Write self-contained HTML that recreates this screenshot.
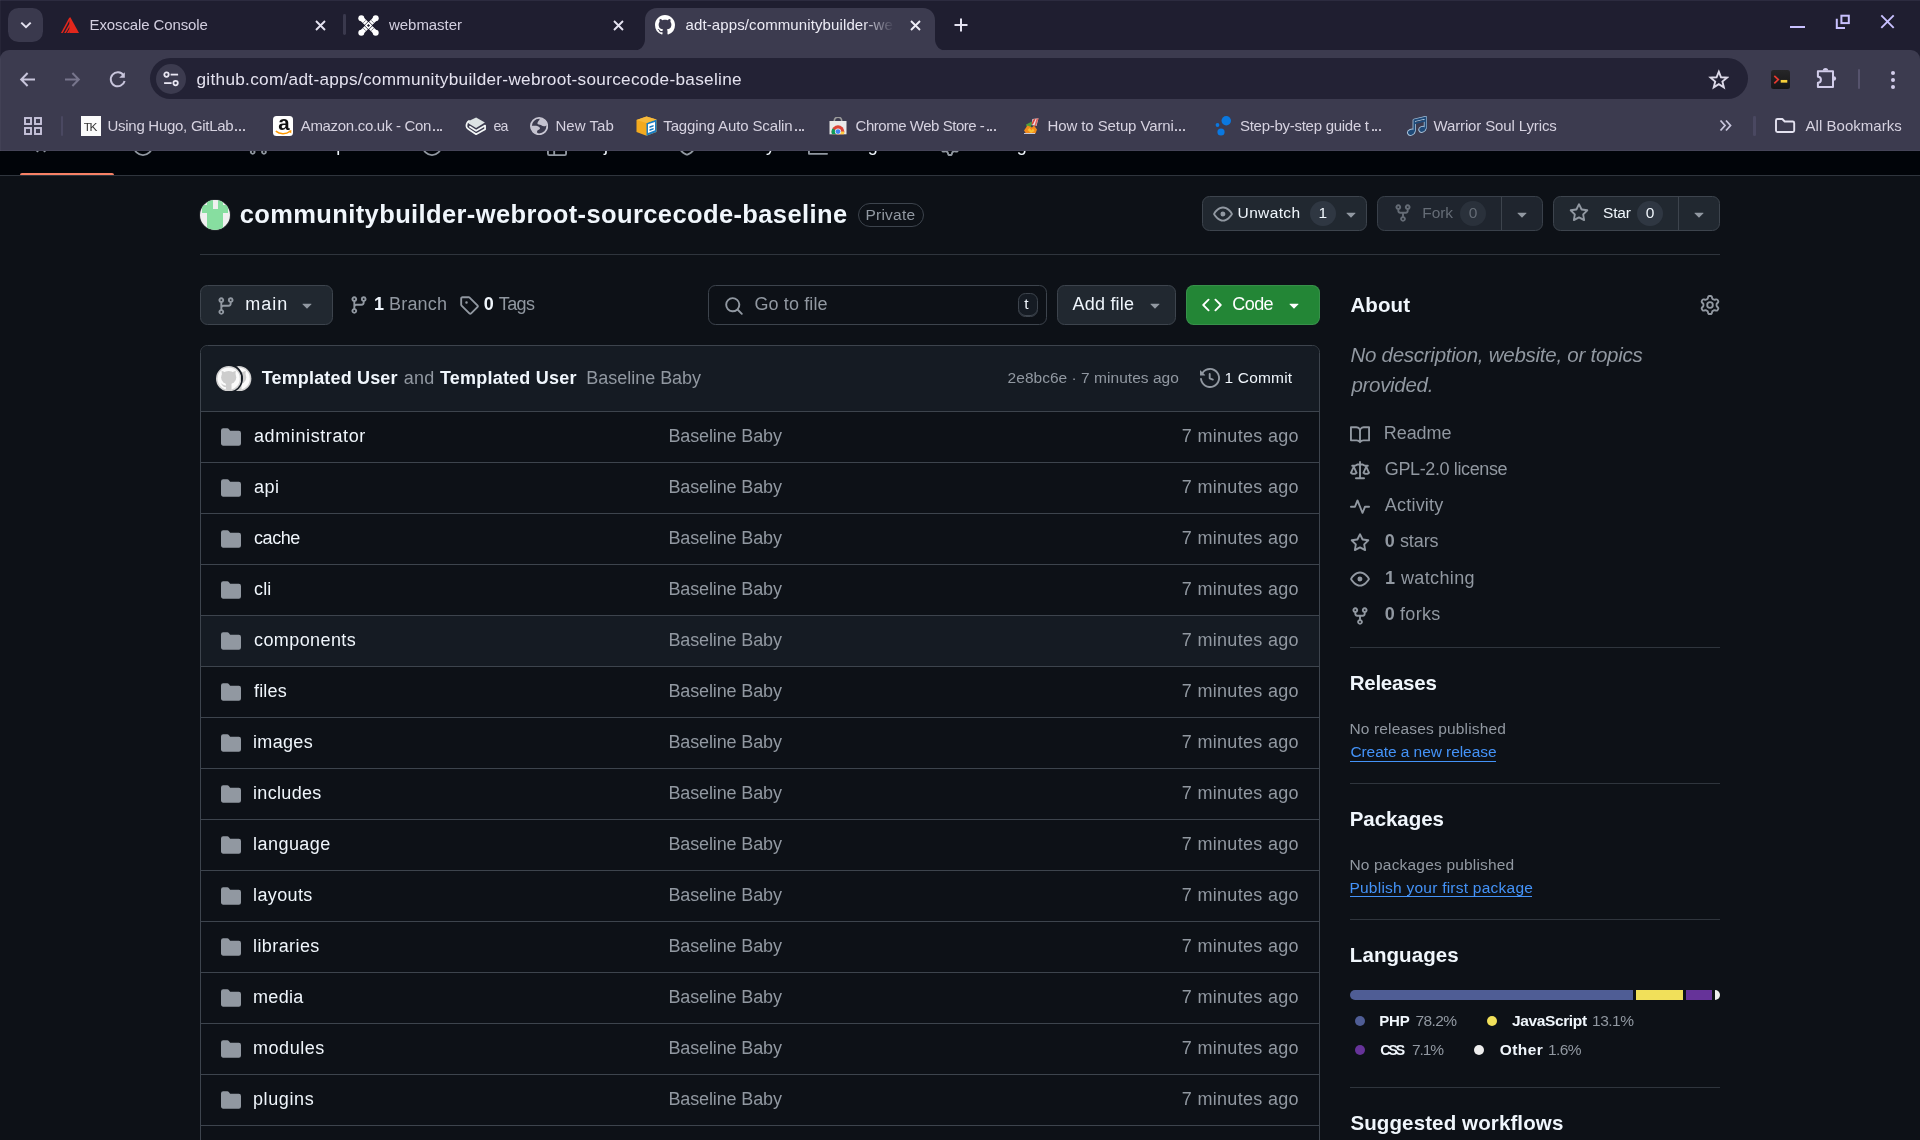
<!DOCTYPE html>
<html><head><meta charset="utf-8"><title>adt-apps/communitybuilder-webroot-sourcecode-baseline</title>
<style>
html,body{margin:0;padding:0}
body{width:1920px;height:1140px;overflow:hidden;position:relative;background:#0d1117;font-family:"Liberation Sans",sans-serif;}
.b{position:absolute;box-sizing:border-box;display:block}
.t{position:absolute;line-height:1;white-space:pre;font-family:"Liberation Sans",sans-serif}
#root{position:absolute;left:0;top:0;width:1920px;height:1140px;overflow:hidden;will-change:transform;transform:translateZ(0)}
</style></head><body><div id="root">
<div class="b" style="left:0px;top:0px;width:1920px;height:151px;background:#1f1e30"></div>
<div class="b" style="left:0px;top:50px;width:1920px;height:101px;background:#3c3b4f;border-radius:9px 9px 0 0"></div>
<div class="b" style="left:8px;top:8px;width:35px;height:34px;background:#3a394d;border-radius:10.500px"></div>
<svg class="b" style="left:18px;top:17px;" width="16" height="16" viewBox="0 0 16 16"><path d="M3.3 5.6 8 10.2l4.7-4.6" fill="none" stroke="#e4e2f0" stroke-width="2"/></svg>
<svg class="b" style="left:60px;top:16px;" width="20" height="18" viewBox="0 0 20 18"><defs><clipPath id="exo"><path d="M0 0h20v16.950H0z"/></clipPath></defs><g clip-path="url(#exo)"><path d="M10.200 1.100 19 16.950H9.300V3.400z" fill="#e2271c"/><g stroke="#e2271c" stroke-width="1.550" fill="none"><path d="M10 1.800 1.300 18"/><path d="M9.900 8.300 4.500 18"/><path d="M9.900 13.300 7.300 18"/></g></g></svg>
<span class="t" style="left:89.50px;top:17.00px;font-size:15px;color:#d3cfe0;letter-spacing:-0.115px;">Exoscale Console</span>
<svg class="b" style="left:315.2px;top:20.2px;" width="11" height="11" viewBox="0 0 11 11"><path d="M1 1l9 9M10 1l-9 9" stroke="#e4e2f0" stroke-width="1.9" fill="none"/></svg>
<div class="b" style="left:343.2px;top:14px;width:2.8px;height:20.5px;background:#3a394d;border-radius:1.400px"></div>
<svg class="b" style="left:357.5px;top:14.5px;" width="21" height="21" viewBox="0 0 21 21"><g fill="none" stroke="#fff" stroke-width="4.500" stroke-linecap="round"><path d="M4.600 4.600 16.400 16.400M16.400 4.600 4.600 16.400"/></g>
<g fill="#fff"><circle cx="3.300" cy="3.300" r="3"/><circle cx="17.700" cy="3.300" r="3"/><circle cx="3.300" cy="17.700" r="3"/><circle cx="17.700" cy="17.700" r="3"/></g>
<g fill="none" stroke="#1f1e30" stroke-width=".900" opacity=".9"><path d="M10.500 6.300 14.700 10.500 10.500 14.700 6.300 10.500Z"/><path d="M5.300 7.800 7.800 5.300M13.200 5.300 15.700 7.800M15.700 13.200 13.200 15.700M7.800 15.700 5.300 13.200" opacity=".7"/></g>
<rect x="9.400" y="9.400" width="2.200" height="2.200" transform="rotate(45 10.500 10.500)" fill="#1f1e30"/></svg>
<span class="t" style="left:389.00px;top:17.00px;font-size:15px;color:#d3cfe0;letter-spacing:-0.046px;">webmaster</span>
<svg class="b" style="left:613.2px;top:20.2px;" width="11" height="11" viewBox="0 0 11 11"><path d="M1 1l9 9M10 1l-9 9" stroke="#e4e2f0" stroke-width="1.9" fill="none"/></svg>
<svg class="b" style="left:633px;top:8px" width="314" height="43" viewBox="0 0 314 43"><path d="M0 43 C7 43 12 38 12 31 V12 C12 5 17 0 24 0 H290 C297 0 302 5 302 12 V31 C302 38 307 43 314 43 Z" fill="#3c3b4f"/></svg>
<svg class="b" style="left:655px;top:15px;" width="20" height="20" viewBox="0 0 16 16"><path fill="#fff" d="M8 0c4.42 0 8 3.58 8 8a8.013 8.013 0 0 1-5.45 7.59c-.4.08-.55-.17-.55-.38 0-.27.01-1.13.01-2.2 0-.75-.25-1.23-.54-1.48 1.78-.2 3.65-.88 3.65-3.95 0-.88-.31-1.59-.82-2.15.08-.2.36-1.02-.08-2.12 0 0-.67-.22-2.2.82-.64-.18-1.32-.27-2-.27-.68 0-1.36.09-2 .27-1.53-1.03-2.2-.82-2.2-.82-.44 1.1-.16 1.92-.08 2.12-.51.56-.82 1.28-.82 2.15 0 3.06 1.86 3.75 3.64 3.95-.23.2-.44.55-.51 1.07-.46.21-1.61.55-2.33-.66-.15-.24-.6-.83-1.23-.82-.67.01-.27.38.01.53.34.19.73.9.82 1.13.16.45.68 1.31 2.69.94 0 .67.01 1.3.01 1.49 0 .21-.15.45-.55.38A7.995 7.995 0 0 1 0 8c0-4.42 3.58-8 8-8Z"/></svg>
<span class="t" style="left:685.50px;top:17.00px;font-size:15px;color:#ecebf5;letter-spacing:0.114px;">adt-apps/communitybuilder-we</span>
<div class="b" style="left:862px;top:10px;width:36px;height:32px;background:linear-gradient(90deg,rgba(60,59,79,0),#3c3b4f 90%)"></div>
<svg class="b" style="left:910.2px;top:20.2px;" width="11" height="11" viewBox="0 0 11 11"><path d="M1 1l9 9M10 1l-9 9" stroke="#efeef7" stroke-width="1.9" fill="none"/></svg>
<svg class="b" style="left:954px;top:18px;" width="14" height="14" viewBox="0 0 14 14"><path d="M7 .5v13M.5 7h13" stroke="#e4e2f0" stroke-width="2" fill="none"/></svg>
<div class="b" style="left:1790px;top:26px;width:15px;height:2.3px;background:#c9c1ff"></div>
<svg class="b" style="left:1834px;top:13px;" width="18" height="17" viewBox="0 0 18 17"><rect x="7.400" y="2.700" width="7.400" height="7.400" fill="none" stroke="#c9c1ff" stroke-width="2"/><path d="M2.800 5.800V15H11" fill="none" stroke="#c9c1ff" stroke-width="2"/></svg>
<svg class="b" style="left:1880px;top:14px;" width="15" height="15" viewBox="0 0 15 15"><path d="M1.300 1.400 13.700 13.900M13.700 1.400 1.300 13.900" stroke="#c9c1ff" stroke-width="1.900" fill="none"/></svg>
<div class="b" style="left:0px;top:0px;width:1920px;height:1px;background:#2c2b3f"></div>
<div class="b" style="left:0px;top:150px;width:1920px;height:1px;background:#454458"></div>
<div class="b" style="left:0px;top:0px;width:1px;height:151px;background:rgba(255,255,255,.035)"></div>
<svg class="b" style="left:19px;top:71px;" width="17" height="17" viewBox="0 0 17 17"><path d="M16 8.5H2.5M8.6 2 2.2 8.5l6.4 6.5" fill="none" stroke="#c8c5dc" stroke-width="2"/></svg>
<svg class="b" style="left:64px;top:71px;" width="17" height="17" viewBox="0 0 17 17"><path d="M1 8.5h13.5M8.4 2l6.4 6.5L8.4 15" fill="none" stroke="#77758c" stroke-width="2"/></svg>
<svg class="b" style="left:108px;top:70px;" width="19" height="19" viewBox="0 0 19 19"><path d="M15.6 5.4A7 7 0 1 0 16.6 11" fill="none" stroke="#c8c5dc" stroke-width="2"/><path d="M16.8 2.2v5.6h-5.6z" fill="#c8c5dc"/></svg>
<div class="b" style="left:150px;top:58px;width:1598px;height:41px;background:#232235;border-radius:21px"></div>
<div class="b" style="left:156px;top:64px;width:30px;height:30px;background:#3c3b4f;border-radius:50%"></div>
<svg class="b" style="left:161px;top:70px;" width="19" height="19" viewBox="0 0 19 19"><g fill="none" stroke="#e9e7f3" stroke-width="1.800"><circle cx="5.500" cy="4.600" r="2.200"/><path d="M9.600 4.600h7.500"/><circle cx="14.600" cy="13.100" r="2.200"/><path d="M3.100 13.100h7.500"/></g></svg>
<span class="t" style="left:196.50px;top:71.00px;font-size:17.2px;color:#e4e2ef;letter-spacing:0.296px;">github.com/adt-apps/communitybuilder-webroot-sourcecode-baseline</span>
<svg class="b" style="left:1707.6px;top:68.5px;" width="21.6" height="21.6" viewBox="0 0 24 24"><path d="M12 3 14.470 9.200 21.130 9.630 15.990 13.900 17.640 20.370 12 16.800 6.360 20.370 8.010 13.900 2.870 9.630 9.530 9.200Z" fill="none" stroke="#dcd9e8" stroke-width="2.100" stroke-linejoin="miter"/></svg>
<div class="b" style="left:1771px;top:70.2px;width:19.2px;height:18.4px;background:linear-gradient(180deg,#262628,#151517);border-radius:2.500px"></div>
<svg class="b" style="left:1772px;top:73px;" width="17" height="13" viewBox="0 0 17 13"><path d="M2.300 2.800 6.300 6.600 2.300 10.400" fill="none" stroke="#e8392f" stroke-width="1.700"/><path d="M8.700 8.300h6.600" stroke="#f7cf3a" stroke-width="2.700"/></svg>
<svg class="b" style="left:1815px;top:65px;" width="24" height="24" viewBox="0 0 24 24"><path d="M2.900 6.300H18V22H2.900V17.800A3 3 0 0 0 2.900 11.800Z" fill="none" stroke="#d2cdea" stroke-width="2" stroke-linejoin="round"/><path d="M7.800 5.600A2.700 2.700 0 0 1 13.200 5.600Z" fill="#d2cdea"/><path d="M18.800 11.200A2.300 2.300 0 0 1 18.800 15.800Z" fill="#d2cdea"/></svg>
<div class="b" style="left:1858px;top:69.2px;width:1.8px;height:19.7px;background:#56536d;border-radius:1px"></div>
<div class="b" style="left:1890.6px;top:70.7px;width:4px;height:4px;background:#d2cdea;border-radius:50%"></div>
<div class="b" style="left:1890.6px;top:77.7px;width:4px;height:4px;background:#d2cdea;border-radius:50%"></div>
<div class="b" style="left:1890.6px;top:84.6px;width:4px;height:4px;background:#d2cdea;border-radius:50%"></div>
<svg class="b" style="left:23.5px;top:116.5px;" width="18" height="18" viewBox="0 0 18 18"><g fill="none" stroke="#c8c5dc" stroke-width="1.9"><rect x="1" y="1" width="6" height="6"/><rect x="11" y="1" width="6" height="6"/><rect x="1" y="11" width="6" height="6"/><rect x="11" y="11" width="6" height="6"/></g></svg>
<div class="b" style="left:60.5px;top:116px;width:2.6px;height:20px;background:#4a4861;border-radius:1.300px"></div>
<div class="b" style="left:81px;top:116px;width:20px;height:20px;background:#fbfbfb"></div>
<span class="t" style="left:83.70px;top:122.00px;font-size:11.8px;color:#333;letter-spacing:-1.306px;">TK</span>
<span class="t" style="left:107.50px;top:118.00px;font-size:15px;color:#d6d2e0;letter-spacing:-0.277px;">Using Hugo, GitLab</span>
<div class="b" style="left:235.0px;top:128.95px;width:2.1px;height:2.1px;background:#d6d2e0;border-radius:.400px"></div>
<div class="b" style="left:238.75px;top:128.95px;width:2.1px;height:2.1px;background:#d6d2e0;border-radius:.400px"></div>
<div class="b" style="left:242.5px;top:128.95px;width:2.1px;height:2.1px;background:#d6d2e0;border-radius:.400px"></div>
<div class="b" style="left:273px;top:116px;width:20px;height:20px;background:#fff;border-radius:3.500px"></div>
<span class="t" style="left:278.30px;top:113.00px;font-size:20.5px;color:#111;font-weight:700;">a</span>
<svg class="b" style="left:274.8px;top:129.8px;" width="17" height="6" viewBox="0 0 17 6"><path d="M.800 1.200c4 3.200 10.300 3.200 14 .300" fill="none" stroke="#f90" stroke-width="1.500"/><path d="M16.400 0 16.200 3.500 13.300 1.100z" fill="#f90"/></svg>
<span class="t" style="left:300.70px;top:118.00px;font-size:15px;color:#d6d2e0;letter-spacing:-0.303px;">Amazon.co.uk - Con</span>
<div class="b" style="left:432.75px;top:128.95px;width:2.1px;height:2.1px;background:#d6d2e0;border-radius:.400px"></div>
<div class="b" style="left:436.5px;top:128.95px;width:2.1px;height:2.1px;background:#d6d2e0;border-radius:.400px"></div>
<div class="b" style="left:440.25px;top:128.95px;width:2.1px;height:2.1px;background:#d6d2e0;border-radius:.400px"></div>
<svg class="b" style="left:465.4px;top:116.5px;" width="21" height="19.5" viewBox="0 0 21 19.500"><path d="M11.100.400 19.900 5.600 11.100 10.900 4 6.700Q2 5.200 3.800 3.900z" fill="#dde3e4"/><path d="M4 3.900C1.400 5.500 1.400 6.800 1.400 9.100c0 1.400.600 2.100 1.900 2.900l7.800 5.200 9-5V8.600l-9 5.100-6.200-4" fill="none" stroke="#f3f6f6" stroke-width="1.700" stroke-linejoin="round" stroke-linecap="round"/></svg>
<span class="t" style="left:493.50px;top:119.00px;font-size:14.2px;color:#d6d2e0;letter-spacing:-0.990px;">ea</span>
<svg class="b" style="left:529.9px;top:116.9px;" width="18.2" height="18.2" viewBox="0 0 18.200 18.200"><defs><clipPath id="gl"><circle cx="9.100" cy="9.100" r="8.300"/></clipPath></defs><circle cx="9.100" cy="9.100" r="8.200" fill="none" stroke="#c9c7d4" stroke-width="1.800"/><g clip-path="url(#gl)" fill="#c4c2cf"><path d="M9.800 1.500C9.600 3.600 7.200 4.800 7.400 6.600 7.600 8.200 9.800 7.400 11.300 8.350 12.800 9.300 14.500 9.500 16 8.700L19 5 14 0z"/><path d="M1 8.800c2.300.100 5-.300 6.900.500 1.700.700 2.500 1.700 1.900 2.600-.700 1-2.600 1.100-2.700 2.300-.100.700.200 1.400.300 2.300L3 19-1 12z"/></g></svg>
<span class="t" style="left:555.50px;top:118.00px;font-size:15px;color:#d6d2e0;letter-spacing:0.039px;">New Tab</span>
<svg class="b" style="left:635.5px;top:116px;" width="21" height="20" viewBox="0 0 21 20"><path d="M.500 4 10.500.500 20.500 3.500v12.500L10.500 19.700.500 16z" fill="#f3aa1f"/><path d="M10.500 7 20.500 3.500V16L10.500 19.700z" fill="#1b7dc2"/><path d="M.500 4 10.500 7 20.500 3.500 10.500.500z" fill="#f7ba3c"/><path d="M12 8.300 19 5.900v8.400L12 17z" fill="#fff"/><path d="M13.500 10.300 17.600 8.900v1.700l-4.100 1.400zM13.500 13.300l4.100-1.400v1.700l-4.100 1.400z" fill="#1b7dc2"/></svg>
<span class="t" style="left:663.30px;top:118.00px;font-size:15px;color:#d6d2e0;letter-spacing:-0.136px;">Tagging Auto Scalin</span>
<div class="b" style="left:794.75px;top:128.95px;width:2.1px;height:2.1px;background:#d6d2e0;border-radius:.400px"></div>
<div class="b" style="left:798.5px;top:128.95px;width:2.1px;height:2.1px;background:#d6d2e0;border-radius:.400px"></div>
<div class="b" style="left:802.25px;top:128.95px;width:2.1px;height:2.1px;background:#d6d2e0;border-radius:.400px"></div>
<svg class="b" style="left:829px;top:116.5px;" width="18" height="18" viewBox="0 0 18 18"><defs><clipPath id="bag"><path d="M.500 4h17v13.300h-17z"/></clipPath></defs><path d="M5.300 4.500V3.800a3.700 3.700 0 0 1 7.400 0v.700" fill="none" stroke="#9b9b9b" stroke-width="1.600"/><path d="M.500 4h17v13.300h-17z" fill="#e9e9e9"/><g clip-path="url(#bag)"><circle cx="9" cy="14.600" r="6.300" fill="#db4437"/><path d="M9 14.600 3.500 11.500A6.300 6.300 0 0 0 6 20.500z" fill="#0f9d58"/><path d="M9 14.600h6.300A6.300 6.300 0 0 1 6 20.500z" fill="#ffcd40"/><circle cx="9" cy="14.600" r="3.100" fill="#f1f1f1"/><circle cx="9" cy="14.600" r="2.400" fill="#4285f4"/></g></svg>
<span class="t" style="left:855.60px;top:118.00px;font-size:15px;color:#d6d2e0;letter-spacing:-0.472px;">Chrome Web Store -</span>
<div class="b" style="left:986.5px;top:128.95px;width:2.1px;height:2.1px;background:#d6d2e0;border-radius:.400px"></div>
<div class="b" style="left:990.25px;top:128.95px;width:2.1px;height:2.1px;background:#d6d2e0;border-radius:.400px"></div>
<div class="b" style="left:994.0px;top:128.95px;width:2.1px;height:2.1px;background:#d6d2e0;border-radius:.400px"></div>
<svg class="b" style="left:1023px;top:117.5px;" width="17" height="16.5" viewBox="0 0 17 16.500"><path d="M9.500 1 15.500.300 13.500 8 8.500 7z" fill="#e9e4ea"/><path d="M10.500 1.300 12.700.800 9.800 6.800 8.300 6z" fill="#d9453c"/><path d="M13.600.600 15.600.300 12.800 8.600 11.300 8z" fill="#d9453c" opacity=".800"/><path d="M3 6.500 9 3.500 8 9 4 10z" fill="#4f9d3a"/><path d="M1 12.500 4.500 7.500 9 9.500 11 7.500 14 11.500 12.500 15.500H3z" fill="#f28a1b"/><path d="M4.500 12 6.500 10 8.500 12.500 10 10.500 11.500 13 8 15z" fill="#fbc02d"/><path d="M1 15.500h11" stroke="#c9c9d6" stroke-width="1"/></svg>
<span class="t" style="left:1047.50px;top:118.00px;font-size:15px;color:#d6d2e0;letter-spacing:-0.099px;">How to Setup Varni</span>
<div class="b" style="left:1175.25px;top:128.95px;width:2.1px;height:2.1px;background:#d6d2e0;border-radius:.400px"></div>
<div class="b" style="left:1179.0px;top:128.95px;width:2.1px;height:2.1px;background:#d6d2e0;border-radius:.400px"></div>
<div class="b" style="left:1182.75px;top:128.95px;width:2.1px;height:2.1px;background:#d6d2e0;border-radius:.400px"></div>
<svg class="b" style="left:1214px;top:115px;" width="20" height="22" viewBox="0 0 20 22"><circle cx="12.250" cy="5.750" r="4.750" fill="#0a78e0"/><circle cx="7" cy="17" r="3.600" fill="#0a78e0"/><circle cx="3.500" cy="10" r="1.900" fill="#0a78e0"/></svg>
<span class="t" style="left:1240.00px;top:118.00px;font-size:15px;color:#d6d2e0;letter-spacing:-0.275px;">Step-by-step guide t</span>
<div class="b" style="left:1371.5px;top:128.95px;width:2.1px;height:2.1px;background:#d6d2e0;border-radius:.400px"></div>
<div class="b" style="left:1375.25px;top:128.95px;width:2.1px;height:2.1px;background:#d6d2e0;border-radius:.400px"></div>
<div class="b" style="left:1379.0px;top:128.95px;width:2.1px;height:2.1px;background:#d6d2e0;border-radius:.400px"></div>
<svg class="b" style="left:1405.5px;top:115.5px;" width="21.5" height="21" viewBox="0 0 21.500 21"><g fill="none" stroke="#a9c3db" stroke-width="3.400" stroke-linejoin="round"><path d="M8.300 15.500V4.300L19.500 1.700v11"/></g><ellipse cx="5.200" cy="16.200" rx="4.300" ry="3.400" fill="#a9c3db" transform="rotate(-25 5.200 16.200)"/><ellipse cx="16.300" cy="13.300" rx="4.100" ry="3.300" fill="#a9c3db" transform="rotate(-25 16.300 13.300)"/><g fill="none" stroke="#1f4a78" stroke-width="1.800"><path d="M8.300 15.500V4.300L19.500 1.700v11"/><path d="M8.300 7.300 19.500 4.700"/></g><ellipse cx="5.200" cy="16.200" rx="3.300" ry="2.500" fill="#1f4a78" transform="rotate(-25 5.200 16.200)"/><ellipse cx="16.300" cy="13.300" rx="3.100" ry="2.400" fill="#1f4a78" transform="rotate(-25 16.300 13.300)"/></svg>
<span class="t" style="left:1433.50px;top:118.00px;font-size:15px;color:#d6d2e0;letter-spacing:-0.129px;">Warrior Soul Lyrics</span>
<svg class="b" style="left:1719px;top:119px;" width="13" height="13" viewBox="0 0 13 13"><path d="M1.500 1.500 6 6.500l-4.500 5M7 1.500l4.500 5-4.500 5" fill="none" stroke="#c8c5dc" stroke-width="1.800"/></svg>
<div class="b" style="left:1753px;top:116px;width:2.6px;height:20px;background:#4a4861;border-radius:1.300px"></div>
<svg class="b" style="left:1774.25px;top:117px;" width="23" height="17" viewBox="0 0 23 17"><path d="M2 3.500a1.500 1.500 0 0 1 1.500-1.500h4.800l2.400 2.500h8a1.500 1.500 0 0 1 1.500 1.500v7.500a1.500 1.500 0 0 1-1.500 1.500h-15.200A1.500 1.500 0 0 1 2 13.500z" fill="none" stroke="#e4e2f0" stroke-width="1.900" stroke-linejoin="round"/></svg>
<span class="t" style="left:1805.50px;top:118.00px;font-size:15px;color:#d6d2e0;letter-spacing:0.033px;">All Bookmarks</span>
<div class="b" style="left:0;top:151px;width:1920px;height:989px;overflow:hidden">
<div class="b" style="left:0;top:-151px;width:1920px;height:1140px">
<div class="b" style="left:0px;top:151px;width:1920px;height:24px;background:#010409"></div>
<div class="b" style="left:0px;top:175px;width:1920px;height:1px;background:#2f353d"></div>
<div class="b" style="left:20px;top:172.5px;width:93.5px;height:2.5px;background:#f78166;border-radius:2px 2px 0 0"></div>
<svg class="b" style="left:30.5px;top:136px;" width="20" height="20" viewBox="0 0 16 16"><path fill="#9198a1" d="m11.28 3.22 4.25 4.25a.75.75 0 0 1 0 1.06l-4.25 4.25a.749.749 0 0 1-1.275-.326.749.749 0 0 1 .215-.734L13.94 8l-3.72-3.72a.749.749 0 0 1 .326-1.275.749.749 0 0 1 .734.215Zm-6.56 0a.751.751 0 0 1 1.042.018.751.751 0 0 1 .018 1.042L2.06 8l3.72 3.72a.749.749 0 0 1-.326 1.275.749.749 0 0 1-.734-.215L.47 8.53a.75.75 0 0 1 0-1.06Z"/></svg>
<span class="t" style="left:60.50px;top:136.00px;font-size:18px;color:#f0f6fc;font-weight:700;letter-spacing:-1.163px;">Code</span>
<svg class="b" style="left:133px;top:136px;" width="20" height="20" viewBox="0 0 16 16"><path fill="#9198a1" d="M8 9.500a1.500 1.500 0 1 0 0-3 1.500 1.500 0 0 0 0 3Z M8 0a8 8 0 1 1 0 16A8 8 0 0 1 8 0ZM1.500 8a6.500 6.500 0 1 0 13 0 6.500 6.500 0 0 0-13 0Z"/></svg>
<span class="t" style="left:162.00px;top:136.00px;font-size:18px;color:#f0f6fc;letter-spacing:-0.004px;">Issues</span>
<svg class="b" style="left:248px;top:136px;" width="20" height="20" viewBox="0 0 16 16"><path fill="#9198a1" d="M1.500 3.250a2.250 2.250 0 1 1 3 2.122v5.256a2.251 2.251 0 1 1-1.500 0V5.372A2.250 2.250 0 0 1 1.500 3.250Zm5.677-.177L9.573.677A.250.250 0 0 1 10 .854V2.500h1A2.500 2.500 0 0 1 13.500 5v5.628a2.251 2.251 0 1 1-1.500 0V5a1 1 0 0 0-1-1h-1v1.646a.250.250 0 0 1-.427.177L7.177 3.427a.250.250 0 0 1 0-.354ZM3.750 2.500a.750.750 0 1 0 0 1.500.750.750 0 0 0 0-1.500Zm0 9.500a.750.750 0 1 0 0 1.500.750.750 0 0 0 0-1.500Zm8.250.750a.750.750 0 1 0 1.500 0 .750.750 0 0 0-1.500 0Z"/></svg>
<span class="t" style="left:277.00px;top:136.00px;font-size:18px;color:#f0f6fc;letter-spacing:0.329px;">Pull requests</span>
<svg class="b" style="left:421.5px;top:136px;" width="20" height="20" viewBox="0 0 16 16"><path fill="#9198a1" d="M8 0a8 8 0 1 1 0 16A8 8 0 0 1 8 0ZM1.500 8a6.500 6.500 0 1 0 13 0 6.500 6.500 0 0 0-13 0Zm4.879-2.773 4.264 2.559a.250.250 0 0 1 0 .428l-4.264 2.559A.250.250 0 0 1 6 10.559V5.442a.250.250 0 0 1 .379-.215Z"/></svg>
<span class="t" style="left:451.50px;top:136.00px;font-size:18px;color:#f0f6fc;letter-spacing:-0.088px;">Actions</span>
<svg class="b" style="left:546.5px;top:136px;" width="20" height="20" viewBox="0 0 16 16"><path fill="#9198a1" d="M0 1.750C0 .784.784 0 1.750 0h12.500C15.216 0 16 .784 16 1.750v12.500A1.750 1.750 0 0 1 14.250 16H1.750A1.750 1.750 0 0 1 0 14.250ZM6.500 6.500v8h7.750a.250.250 0 0 0 .250-.250V6.500Zm8-1.500V1.750a.250.250 0 0 0-.250-.250H6.500V5Zm-13 1.500v7.750c0 .138.112.250.250.250H5v-8ZM5 5V1.500H1.750a.250.250 0 0 0-.250.250V5Z"/></svg>
<span class="t" style="left:575.50px;top:136.00px;font-size:18px;color:#f0f6fc;letter-spacing:0.140px;">Projects</span>
<svg class="b" style="left:676.5px;top:136px;" width="20" height="20" viewBox="0 0 16 16"><path fill="#9198a1" d="M7.467.133a1.748 1.748 0 0 1 1.066 0l5.250 1.680A1.750 1.750 0 0 1 15 3.480V7c0 1.566-.320 3.182-1.303 4.682-.983 1.498-2.585 2.813-5.032 3.855a1.697 1.697 0 0 1-1.330 0c-2.447-1.042-4.049-2.357-5.032-3.855C1.320 10.182 1 8.566 1 7V3.480a1.750 1.750 0 0 1 1.217-1.667Zm.610 1.429a.250.250 0 0 0-.153 0l-5.250 1.680a.250.250 0 0 0-.174.238V7c0 1.358.275 2.666 1.057 3.860.784 1.194 2.121 2.340 4.366 3.297a.196.196 0 0 0 .154 0c2.245-.956 3.582-2.104 4.366-3.298C13.225 9.666 13.500 8.360 13.500 7V3.480a.251.251 0 0 0-.174-.237l-5.250-1.680ZM8.750 4.750v3a.750.750 0 0 1-1.500 0v-3a.750.750 0 0 1 1.500 0ZM9 10.500a1 1 0 1 1-2 0 1 1 0 0 1 2 0Z"/></svg>
<span class="t" style="left:706.50px;top:136.00px;font-size:18px;color:#f0f6fc;letter-spacing:0.497px;">Security</span>
<svg class="b" style="left:807.5px;top:136px;" width="20" height="20" viewBox="0 0 16 16"><path fill="#9198a1" d="M1.500 1.750V13.500h13.750a.750.750 0 0 1 0 1.500H.750a.750.750 0 0 1-.750-.750V1.750a.750.750 0 0 1 1.500 0Zm14.280 2.530-5.250 5.250a.750.750 0 0 1-1.060 0L7 7.060 4.280 9.780a.751.751 0 0 1-1.042-.018.751.751 0 0 1-.018-1.042l3.250-3.250a.750.750 0 0 1 1.060 0L10 7.940l4.720-4.720a.751.751 0 0 1 1.042.018.751.751 0 0 1 .018 1.042Z"/></svg>
<span class="t" style="left:836.50px;top:136.00px;font-size:18px;color:#f0f6fc;letter-spacing:0.781px;">Insights</span>
<svg class="b" style="left:940px;top:136px;" width="20" height="20" viewBox="0 0 16 16"><path fill="#9198a1" d="M8 0a8.2 8.2 0 0 1 .701.031C9.444.095 9.990.645 10.160 1.290l.288 1.107c.018.066.079.158.212.224.231.114.454.243.668.386.123.082.233.090.299.071l1.103-.303c.644-.176 1.392.021 1.820.630.270.385.506.792.704 1.218.315.675.111 1.422-.364 1.891l-.814.806c-.049.048-.098.147-.088.294.016.257.016.515 0 .772-.010.147.038.246.088.294l.814.806c.475.469.679 1.216.364 1.891a7.977 7.977 0 0 1-.704 1.217c-.428.610-1.176.807-1.820.630l-1.102-.302c-.067-.019-.177-.011-.300.071a5.909 5.909 0 0 1-.668.386c-.133.066-.194.158-.211.224l-.290 1.106c-.168.646-.715 1.196-1.458 1.260a8.006 8.006 0 0 1-1.402 0c-.743-.064-1.289-.614-1.458-1.260l-.289-1.106c-.018-.066-.079-.158-.212-.224a5.738 5.738 0 0 1-.668-.386c-.123-.082-.233-.090-.299-.071l-1.103.303c-.644.176-1.392-.021-1.820-.630a8.120 8.120 0 0 1-.704-1.218c-.315-.675-.111-1.422.363-1.891l.815-.806c.050-.048.098-.147.088-.294a6.214 6.214 0 0 1 0-.772c.010-.147-.038-.246-.088-.294l-.815-.806C.635 6.045.431 5.298.746 4.623a7.920 7.920 0 0 1 .704-1.217c.428-.610 1.176-.807 1.820-.630l1.102.302c.067.019.177.011.300-.071.214-.143.437-.272.668-.386.133-.066.194-.158.211-.224l.290-1.106C6.009.645 6.556.095 7.299.030 7.530.010 7.764 0 8 0Zm-.571 1.525c-.036.003-.108.036-.137.146l-.289 1.105c-.147.561-.549.967-.998 1.189-.173.086-.340.183-.500.290-.417.278-.970.423-1.529.270l-1.103-.303c-.109-.030-.175.016-.195.045-.220.312-.412.644-.573.990-.014.031-.021.110.059.190l.815.806c.411.406.562.957.530 1.456a4.709 4.709 0 0 0 0 .582c.032.499-.119 1.050-.530 1.456l-.815.806c-.081.080-.073.159-.059.190.162.346.353.677.573.989.020.030.085.076.195.046l1.102-.303c.560-.153 1.113-.008 1.530.270.161.107.328.204.501.290.447.222.850.629.997 1.189l.289 1.105c.029.109.101.143.137.146a6.600 6.600 0 0 0 1.142 0c.036-.003.108-.036.137-.146l.289-1.105c.147-.561.549-.967.998-1.189.173-.086.340-.183.500-.290.417-.278.970-.423 1.529-.270l1.103.303c.109.029.175-.016.195-.045.220-.313.411-.644.573-.990.014-.031.021-.110-.059-.190l-.815-.806c-.411-.406-.562-.957-.530-1.456a4.709 4.709 0 0 0 0-.582c-.032-.499.119-1.050.530-1.456l.815-.806c.081-.080.073-.159.059-.190a6.464 6.464 0 0 0-.573-.989c-.020-.030-.085-.076-.195-.046l-1.102.303c-.560.153-1.113.008-1.530-.270a4.440 4.440 0 0 0-.501-.290c-.447-.222-.850-.629-.997-1.189l-.289-1.105c-.029-.110-.101-.143-.137-.146a6.600 6.600 0 0 0-1.142 0ZM11 8a3 3 0 1 1-6 0 3 3 0 0 1 6 0ZM9.500 8a1.500 1.500 0 1 0-3.001.001A1.500 1.500 0 0 0 9.500 8Z"/></svg>
<span class="t" style="left:970.00px;top:136.00px;font-size:18px;color:#f0f6fc;letter-spacing:0.137px;">Settings</span>
<div class="b" style="left:200px;top:200px;width:30px;height:30px;border-radius:50%;background:#f0f0f0;overflow:hidden;box-shadow:0 0 0 1px rgba(255,255,255,.08)"><div class="b" style="left:7px;top:5px;width:16px;height:25px;background:#87dea0"></div><div class="b" style="left:2px;top:5px;width:26px;height:8px;background:#87dea0"></div><div class="b" style="left:12.500px;top:0;width:5px;height:8.500px;background:#f0f0f0"></div><div class="b" style="left:7px;top:0;width:5.500px;height:5px;background:#87dea0"></div><div class="b" style="left:17.500px;top:0;width:5.500px;height:5px;background:#87dea0"></div></div>
<span class="t" style="left:239.70px;top:202.00px;font-size:25.5px;color:#f0f6fc;font-weight:700;letter-spacing:0.385px;">communitybuilder-webroot-sourcecode-baseline</span>
<div class="b" style="left:858px;top:203px;width:66px;height:24px;border:1px solid #3d444d;border-radius:12px"></div>
<span class="t" style="left:865.50px;top:207.00px;font-size:15.5px;color:#9198a1;letter-spacing:0.213px;">Private</span>
<div class="b" style="left:1202px;top:196px;width:165px;height:35px;background:#212830;border:1px solid #3d444d;border-radius:7.500px"></div>
<svg class="b" style="left:1213px;top:203.6px;" width="20" height="20" viewBox="0 0 16 16"><path fill="#9198a1" d="M8 2c1.981 0 3.671.992 4.933 2.078 1.27 1.091 2.187 2.345 2.637 3.023a1.62 1.62 0 0 1 0 1.798c-.45.678-1.367 1.932-2.637 3.023C11.67 13.008 9.981 14 8 14c-1.981 0-3.671-.992-4.933-2.078C1.797 10.830.88 9.576.43 8.898a1.62 1.62 0 0 1 0-1.798c.45-.677 1.367-1.931 2.637-3.022C4.33 2.992 6.019 2 8 2ZM1.679 7.932a.12.12 0 0 0 0 .136c.411.622 1.241 1.75 2.366 2.717C5.176 11.758 6.527 12.5 8 12.5c1.473 0 2.825-.742 3.955-1.715 1.124-.967 1.954-2.096 2.366-2.717a.12.12 0 0 0 0-.136c-.412-.621-1.242-1.75-2.366-2.717C10.824 4.242 9.473 3.5 8 3.5c-1.473 0-2.825.742-3.955 1.715-1.124.967-1.954 2.096-2.366 2.717ZM8 10a2 2 0 1 1-.001-3.999A2 2 0 0 1 8 10Z"/></svg>
<span class="t" style="left:1237.60px;top:205.00px;font-size:15.5px;color:#f0f6fc;letter-spacing:0.353px;">Unwatch</span>
<div class="b" style="left:1310px;top:201px;width:26px;height:25px;background:#2f3742;border-radius:12.500px"></div>
<span class="t" style="left:1318.60px;top:205.00px;font-size:15.5px;color:#f0f6fc;">1</span>
<svg class="b" style="left:1340.9px;top:203.9px;" width="20" height="20" viewBox="0 0 16 16"><path fill="#9198a1" d="m4.427 7.427 3.396 3.396a.25.25 0 0 0 .354 0l3.396-3.396A.25.25 0 0 0 11.396 7H4.604a.25.25 0 0 0-.177.427Z"/></svg>
<div class="b" style="left:1377px;top:196px;width:166px;height:35px;background:#212830;border:1px solid #3d444d;border-radius:7.500px;opacity:.95"></div>
<div class="b" style="left:1501px;top:197px;width:1px;height:33px;background:#3d444d"></div>
<svg class="b" style="left:1393.1px;top:202.75px;" width="20" height="20" viewBox="0 0 16 16"><path fill="#656c76" d="M5 5.372v.878c0 .414.336.750.750.750h4.500a.750.750 0 0 0 .750-.750v-.878a2.250 2.250 0 1 1 1.500 0v.878a2.250 2.250 0 0 1-2.250 2.250h-1.500v2.128a2.251 2.251 0 1 1-1.500 0V8.500h-1.500A2.250 2.250 0 0 1 3.500 6.250v-.878a2.250 2.250 0 1 1 1.500 0ZM5 3.250a.750.750 0 1 0-1.500 0 .750.750 0 0 0 1.500 0Zm6.750.750a.750.750 0 1 0 0-1.500.750.750 0 0 0 0 1.500Zm-3 8.750a.750.750 0 1 0-1.500 0 .750.750 0 0 0 1.500 0Z"/></svg>
<span class="t" style="left:1422.30px;top:205.00px;font-size:15.5px;color:#656c76;letter-spacing:-0.117px;">Fork</span>
<div class="b" style="left:1460px;top:201px;width:26px;height:25px;background:#2a313b;border-radius:12.500px"></div>
<span class="t" style="left:1468.80px;top:205.00px;font-size:15.5px;color:#656c76;">0</span>
<svg class="b" style="left:1512px;top:203.9px;" width="20" height="20" viewBox="0 0 16 16"><path fill="#9198a1" d="m4.427 7.427 3.396 3.396a.25.25 0 0 0 .354 0l3.396-3.396A.25.25 0 0 0 11.396 7H4.604a.25.25 0 0 0-.177.427Z"/></svg>
<div class="b" style="left:1553px;top:196px;width:167px;height:35px;background:#212830;border:1px solid #3d444d;border-radius:7.500px"></div>
<div class="b" style="left:1678px;top:197px;width:1px;height:33px;background:#3d444d"></div>
<svg class="b" style="left:1569px;top:202.7px;" width="20" height="20" viewBox="0 0 16 16"><path fill="#9198a1" d="M8 .25a.75.75 0 0 1 .673.418l1.882 3.815 4.21.612a.75.75 0 0 1 .416 1.279l-3.046 2.97.719 4.192a.751.751 0 0 1-1.088.791L8 12.347l-3.766 1.98a.75.75 0 0 1-1.088-.79l.72-4.194L.818 6.374a.75.75 0 0 1 .416-1.28l4.21-.611L7.327.668A.75.75 0 0 1 8 .25Zm0 2.445L6.615 5.5a.75.75 0 0 1-.564.41l-3.097.45 2.24 2.184a.75.75 0 0 1 .216.664l-.528 3.084 2.769-1.456a.75.75 0 0 1 .698 0l2.77 1.456-.53-3.084a.75.75 0 0 1 .216-.664l2.24-2.183-3.096-.45a.75.75 0 0 1-.564-.41L8 2.694Z"/></svg>
<span class="t" style="left:1603.10px;top:205.00px;font-size:15.5px;color:#f0f6fc;letter-spacing:-0.188px;">Star</span>
<div class="b" style="left:1637px;top:201px;width:26px;height:25px;background:#2f3742;border-radius:12.500px"></div>
<span class="t" style="left:1645.80px;top:205.00px;font-size:15.5px;color:#f0f6fc;">0</span>
<svg class="b" style="left:1689px;top:203.9px;" width="20" height="20" viewBox="0 0 16 16"><path fill="#9198a1" d="m4.427 7.427 3.396 3.396a.25.25 0 0 0 .354 0l3.396-3.396A.25.25 0 0 0 11.396 7H4.604a.25.25 0 0 0-.177.427Z"/></svg>
<div class="b" style="left:200px;top:254px;width:1520px;height:1px;background:#2f353d"></div>
<div class="b" style="left:200px;top:285px;width:133px;height:40px;background:#212830;border:1px solid #3d444d;border-radius:7.500px"></div>
<svg class="b" style="left:216px;top:296.25px;" width="20" height="20" viewBox="0 0 16 16"><path fill="#9198a1" d="M9.5 3.25a2.25 2.25 0 1 1 3 2.122V6A2.5 2.5 0 0 1 10 8.5H6a1 1 0 0 0-1 1v1.128a2.251 2.251 0 1 1-1.5 0V5.372a2.25 2.25 0 1 1 1.5 0v1.836A2.493 2.493 0 0 1 6 7h4a1 1 0 0 0 1-1v-.628A2.25 2.25 0 0 1 9.5 3.25Zm-6 0a.75.75 0 1 0 1.5 0 .75.75 0 0 0-1.5 0Zm8.25-.75a.75.75 0 1 0 0 1.5.75.75 0 0 0 0-1.5ZM4.25 12a.75.75 0 1 0 0 1.5.75.75 0 0 0 0-1.5Z"/></svg>
<span class="t" style="left:245.25px;top:295.00px;font-size:18px;color:#f0f6fc;letter-spacing:0.999px;">main</span>
<svg class="b" style="left:296.75px;top:294.75px;" width="20" height="20" viewBox="0 0 16 16"><path fill="#9198a1" d="m4.427 7.427 3.396 3.396a.25.25 0 0 0 .354 0l3.396-3.396A.25.25 0 0 0 11.396 7H4.604a.25.25 0 0 0-.177.427Z"/></svg>
<svg class="b" style="left:348.6px;top:295.2px;" width="20" height="20" viewBox="0 0 16 16"><path fill="#9198a1" d="M9.5 3.25a2.25 2.25 0 1 1 3 2.122V6A2.5 2.5 0 0 1 10 8.5H6a1 1 0 0 0-1 1v1.128a2.251 2.251 0 1 1-1.5 0V5.372a2.25 2.25 0 1 1 1.5 0v1.836A2.493 2.493 0 0 1 6 7h4a1 1 0 0 0 1-1v-.628A2.25 2.25 0 0 1 9.5 3.25Zm-6 0a.75.75 0 1 0 1.5 0 .75.75 0 0 0-1.5 0Zm8.25-.75a.75.75 0 1 0 0 1.5.75.75 0 0 0 0-1.5ZM4.25 12a.75.75 0 1 0 0 1.5.75.75 0 0 0 0-1.5Z"/></svg>
<span class="t" style="left:374.00px;top:295.00px;font-size:18px;color:#f0f6fc;font-weight:700;">1</span>
<span class="t" style="left:389.00px;top:295.00px;font-size:18px;color:#9198a1;letter-spacing:0.196px;">Branch</span>
<svg class="b" style="left:458.75px;top:295px;" width="20" height="20" viewBox="0 0 16 16"><path fill="#9198a1" d="M1 7.775V2.75C1 1.784 1.784 1 2.75 1h5.025c.464 0 .91.184 1.238.513l6.25 6.25a1.75 1.75 0 0 1 0 2.474l-5.026 5.026a1.75 1.75 0 0 1-2.474 0l-6.25-6.25A1.752 1.752 0 0 1 1 7.775Zm1.5 0c0 .066.026.13.073.177l6.25 6.25a.25.25 0 0 0 .354 0l5.025-5.025a.25.25 0 0 0 0-.354l-6.25-6.25a.25.25 0 0 0-.177-.073H2.75a.25.25 0 0 0-.25.25ZM6 5a1 1 0 1 1 0 2 1 1 0 0 1 0-2Z"/></svg>
<span class="t" style="left:483.75px;top:295.00px;font-size:18px;color:#f0f6fc;font-weight:700;">0</span>
<span class="t" style="left:498.75px;top:295.00px;font-size:18px;color:#9198a1;letter-spacing:-0.590px;">Tags</span>
<div class="b" style="left:708px;top:285px;width:339px;height:40px;background:#0d1117;border:1px solid #3d444d;border-radius:7.500px"></div>
<svg class="b" style="left:723.75px;top:295.75px;" width="20" height="20" viewBox="0 0 16 16"><path fill="#9198a1" d="M10.68 11.74a6 6 0 0 1-7.922-8.982 6 6 0 0 1 8.982 7.922l3.04 3.04a.749.749 0 0 1-.326 1.275.749.749 0 0 1-.734-.215ZM11.5 7a4.499 4.499 0 1 0-8.997 0A4.499 4.499 0 0 0 11.5 7Z"/></svg>
<span class="t" style="left:754.40px;top:295.00px;font-size:18px;color:#9198a1;letter-spacing:0.120px;">Go to file</span>
<div class="b" style="left:1018px;top:293px;width:20px;height:24px;background:#151b23;border:1px solid #3d444d;border-radius:7.500px;box-shadow:inset 0 -1px 0 #3d444d"></div>
<span class="t" style="left:1024.30px;top:296.00px;font-size:15.5px;color:#f0f6fc;font-family:"Liberation Mono",monospace;">t</span>
<div class="b" style="left:1057px;top:285px;width:119px;height:40px;background:#212830;border:1px solid #3d444d;border-radius:7.500px"></div>
<span class="t" style="left:1072.60px;top:295.00px;font-size:18px;color:#f0f6fc;letter-spacing:0.196px;">Add file</span>
<svg class="b" style="left:1144.7px;top:294.75px;" width="20" height="20" viewBox="0 0 16 16"><path fill="#9198a1" d="m4.427 7.427 3.396 3.396a.25.25 0 0 0 .354 0l3.396-3.396A.25.25 0 0 0 11.396 7H4.604a.25.25 0 0 0-.177.427Z"/></svg>
<div class="b" style="left:1186px;top:285px;width:134px;height:40px;background:#238636;border:1px solid rgba(240,246,252,.1);border-radius:7.500px"></div>
<svg class="b" style="left:1201.6px;top:294.85px;" width="20" height="20" viewBox="0 0 16 16"><path fill="#fff" d="m11.28 3.22 4.25 4.25a.75.75 0 0 1 0 1.06l-4.25 4.25a.749.749 0 0 1-1.275-.326.749.749 0 0 1 .215-.734L13.94 8l-3.72-3.72a.749.749 0 0 1 .326-1.275.749.749 0 0 1 .734.215Zm-6.56 0a.751.751 0 0 1 1.042.018.751.751 0 0 1 .018 1.042L2.06 8l3.72 3.72a.749.749 0 0 1-.326 1.275.749.749 0 0 1-.734-.215L.47 8.53a.75.75 0 0 1 0-1.06Z"/></svg>
<span class="t" style="left:1232.30px;top:295.00px;font-size:18px;color:#fff;letter-spacing:-0.574px;">Code</span>
<svg class="b" style="left:1284.2px;top:294.75px;" width="20" height="20" viewBox="0 0 16 16"><path fill="#fff" d="m4.427 7.427 3.396 3.396a.25.25 0 0 0 .354 0l3.396-3.396A.25.25 0 0 0 11.396 7H4.604a.25.25 0 0 0-.177.427Z"/></svg>
<div class="b" style="left:200px;top:345px;width:1120px;height:800px;border:1px solid #3d444d;border-radius:7.500px 7.500px 0 0;background:#0d1117;overflow:hidden"></div>
<div class="b" style="left:201px;top:346px;width:1118px;height:65px;background:#151b23;border-radius:6.500px 6.500px 0 0"></div>
<svg class="b" style="left:226.300px;top:365.600px" width="25.400" height="25.400" viewBox="0 0 25.400 25.400"><circle cx="12.700" cy="12.700" r="12.700" fill="#d2d2d2"/><circle cx="12.700" cy="12.700" r="11.100" fill="#fbfbfb"/><g fill="#cdcdcd"><ellipse cx="12.700" cy="11.600" rx="7.600" ry="6.700"/><path d="M5.600 4.700 9.300 6.200 6 9.500zM19.800 4.700 16.100 6.200 19.400 9.500z"/><path d="M9.900 16.500h5.600v7.200a11.100 11.100 0 0 1-5.600 0z"/><path d="M4.600 17.300c2 .2 2.300 2.400 5.400 2.100v1.600c-3.600.5-4-2.700-5.400-3.700z"/></g></svg>
<div class="b" style="left:214.1px;top:363.8px;width:28.8px;height:28.8px;background:#151b23;border-radius:50%"></div>
<svg class="b" style="left:215.800px;top:365.600px" width="25.400" height="25.400" viewBox="0 0 25.400 25.400"><circle cx="12.700" cy="12.700" r="12.700" fill="#d2d2d2"/><circle cx="12.700" cy="12.700" r="11.100" fill="#fbfbfb"/><g fill="#cdcdcd"><ellipse cx="12.700" cy="11.600" rx="7.600" ry="6.700"/><path d="M5.600 4.700 9.300 6.200 6 9.500zM19.800 4.700 16.100 6.200 19.400 9.500z"/><path d="M9.900 16.500h5.600v7.200a11.100 11.100 0 0 1-5.600 0z"/><path d="M4.600 17.300c2 .2 2.300 2.400 5.400 2.100v1.600c-3.600.5-4-2.700-5.400-3.700z"/></g></svg>
<span class="t" style="left:261.70px;top:369.00px;font-size:18px;color:#f0f6fc;font-weight:700;letter-spacing:0.161px;">Templated User</span>
<span class="t" style="left:403.70px;top:369.00px;font-size:18px;color:#9198a1;letter-spacing:0.289px;">and</span>
<span class="t" style="left:440.00px;top:369.00px;font-size:18px;color:#f0f6fc;font-weight:700;letter-spacing:0.207px;">Templated User</span>
<span class="t" style="left:586.30px;top:369.00px;font-size:18px;color:#9198a1;letter-spacing:-0.023px;">Baseline Baby</span>
<span class="t" style="left:1007.60px;top:370.00px;font-size:15.5px;color:#9198a1;letter-spacing:0.028px;">2e8bc6e · 7 minutes ago</span>
<svg class="b" style="left:1200px;top:368px;" width="20" height="20" viewBox="0 0 16 16"><path fill="#9198a1" d="m.427 1.927 1.215 1.215a8.002 8.002 0 1 1-1.6 5.685.75.75 0 1 1 1.493-.154 6.5 6.5 0 1 0 1.18-4.458l1.358 1.358A.25.25 0 0 1 3.896 6H.25A.25.25 0 0 1 0 5.75V2.104a.25.25 0 0 1 .427-.177ZM7.75 4a.75.75 0 0 1 .75.75v2.992l2.028.812a.75.75 0 0 1-.557 1.392l-2.5-1A.751.751 0 0 1 7 8.25v-3.5A.75.75 0 0 1 7.75 4Z"/></svg>
<span class="t" style="left:1224.60px;top:370.00px;font-size:15.5px;color:#f0f6fc;letter-spacing:0.170px;">1 Commit</span>
<div class="b" style="left:201px;top:411px;width:1118px;height:1px;background:#3d444d"></div>
<svg class="b" style="left:220.6px;top:426.6px;" width="20" height="20" viewBox="0 0 16 16"><path fill="#9198a1" d="M1.75 1A1.75 1.75 0 0 0 0 2.75v10.5C0 14.216.784 15 1.75 15h12.5A1.75 1.75 0 0 0 16 13.25v-8.500A1.75 1.75 0 0 0 14.25 3H7.5a.25.25 0 0 1-.2-.1l-.9-1.2C6.070 1.260 5.550 1 5 1H1.750Z"/></svg>
<span class="t" style="left:254.00px;top:427.00px;font-size:18px;color:#f0f6fc;letter-spacing:0.605px;">administrator</span>
<span class="t" style="left:668.40px;top:427.00px;font-size:18px;color:#9198a1;letter-spacing:-0.131px;">Baseline Baby</span>
<span class="t" style="left:1181.80px;top:427.00px;font-size:18px;color:#9198a1;letter-spacing:0.312px;">7 minutes ago</span>
<div class="b" style="left:201px;top:462px;width:1118px;height:1px;background:#3d444d"></div>
<svg class="b" style="left:220.6px;top:477.6px;" width="20" height="20" viewBox="0 0 16 16"><path fill="#9198a1" d="M1.75 1A1.75 1.75 0 0 0 0 2.75v10.5C0 14.216.784 15 1.75 15h12.5A1.75 1.75 0 0 0 16 13.25v-8.500A1.75 1.75 0 0 0 14.25 3H7.5a.25.25 0 0 1-.2-.1l-.9-1.2C6.070 1.260 5.550 1 5 1H1.750Z"/></svg>
<span class="t" style="left:254.00px;top:478.00px;font-size:18px;color:#f0f6fc;letter-spacing:0.489px;">api</span>
<span class="t" style="left:668.40px;top:478.00px;font-size:18px;color:#9198a1;letter-spacing:-0.131px;">Baseline Baby</span>
<span class="t" style="left:1181.80px;top:478.00px;font-size:18px;color:#9198a1;letter-spacing:0.312px;">7 minutes ago</span>
<div class="b" style="left:201px;top:513px;width:1118px;height:1px;background:#3d444d"></div>
<svg class="b" style="left:220.6px;top:528.6px;" width="20" height="20" viewBox="0 0 16 16"><path fill="#9198a1" d="M1.75 1A1.75 1.75 0 0 0 0 2.75v10.5C0 14.216.784 15 1.75 15h12.5A1.75 1.75 0 0 0 16 13.25v-8.500A1.75 1.75 0 0 0 14.25 3H7.5a.25.25 0 0 1-.2-.1l-.9-1.2C6.070 1.260 5.550 1 5 1H1.750Z"/></svg>
<span class="t" style="left:254.00px;top:529.00px;font-size:18px;color:#f0f6fc;letter-spacing:-0.430px;">cache</span>
<span class="t" style="left:668.40px;top:529.00px;font-size:18px;color:#9198a1;letter-spacing:-0.131px;">Baseline Baby</span>
<span class="t" style="left:1181.80px;top:529.00px;font-size:18px;color:#9198a1;letter-spacing:0.312px;">7 minutes ago</span>
<div class="b" style="left:201px;top:564px;width:1118px;height:1px;background:#3d444d"></div>
<svg class="b" style="left:220.6px;top:579.6px;" width="20" height="20" viewBox="0 0 16 16"><path fill="#9198a1" d="M1.75 1A1.75 1.75 0 0 0 0 2.75v10.5C0 14.216.784 15 1.75 15h12.5A1.75 1.75 0 0 0 16 13.25v-8.500A1.75 1.75 0 0 0 14.25 3H7.5a.25.25 0 0 1-.2-.1l-.9-1.2C6.070 1.260 5.550 1 5 1H1.750Z"/></svg>
<span class="t" style="left:254.00px;top:580.00px;font-size:18px;color:#f0f6fc;letter-spacing:0.150px;">cli</span>
<span class="t" style="left:668.40px;top:580.00px;font-size:18px;color:#9198a1;letter-spacing:-0.131px;">Baseline Baby</span>
<span class="t" style="left:1181.80px;top:580.00px;font-size:18px;color:#9198a1;letter-spacing:0.312px;">7 minutes ago</span>
<div class="b" style="left:201px;top:615px;width:1118px;height:1px;background:#3d444d"></div>
<div class="b" style="left:201px;top:616px;width:1118px;height:50px;background:#151b23"></div>
<svg class="b" style="left:220.6px;top:630.6px;" width="20" height="20" viewBox="0 0 16 16"><path fill="#9198a1" d="M1.75 1A1.75 1.75 0 0 0 0 2.75v10.5C0 14.216.784 15 1.75 15h12.5A1.75 1.75 0 0 0 16 13.25v-8.500A1.75 1.75 0 0 0 14.25 3H7.5a.25.25 0 0 1-.2-.1l-.9-1.2C6.070 1.260 5.550 1 5 1H1.750Z"/></svg>
<span class="t" style="left:254.00px;top:631.00px;font-size:18px;color:#f0f6fc;letter-spacing:0.404px;">components</span>
<span class="t" style="left:668.40px;top:631.00px;font-size:18px;color:#9198a1;letter-spacing:-0.131px;">Baseline Baby</span>
<span class="t" style="left:1181.80px;top:631.00px;font-size:18px;color:#9198a1;letter-spacing:0.312px;">7 minutes ago</span>
<div class="b" style="left:201px;top:666px;width:1118px;height:1px;background:#3d444d"></div>
<svg class="b" style="left:220.6px;top:681.6px;" width="20" height="20" viewBox="0 0 16 16"><path fill="#9198a1" d="M1.75 1A1.75 1.75 0 0 0 0 2.75v10.5C0 14.216.784 15 1.75 15h12.5A1.75 1.75 0 0 0 16 13.25v-8.500A1.75 1.75 0 0 0 14.25 3H7.5a.25.25 0 0 1-.2-.1l-.9-1.2C6.070 1.260 5.550 1 5 1H1.750Z"/></svg>
<span class="t" style="left:254.00px;top:682.00px;font-size:18px;color:#f0f6fc;letter-spacing:0.173px;">files</span>
<span class="t" style="left:668.40px;top:682.00px;font-size:18px;color:#9198a1;letter-spacing:-0.131px;">Baseline Baby</span>
<span class="t" style="left:1181.80px;top:682.00px;font-size:18px;color:#9198a1;letter-spacing:0.312px;">7 minutes ago</span>
<div class="b" style="left:201px;top:717px;width:1118px;height:1px;background:#3d444d"></div>
<svg class="b" style="left:220.6px;top:732.6px;" width="20" height="20" viewBox="0 0 16 16"><path fill="#9198a1" d="M1.75 1A1.75 1.75 0 0 0 0 2.75v10.5C0 14.216.784 15 1.75 15h12.5A1.75 1.75 0 0 0 16 13.25v-8.500A1.75 1.75 0 0 0 14.25 3H7.5a.25.25 0 0 1-.2-.1l-.9-1.2C6.070 1.260 5.550 1 5 1H1.750Z"/></svg>
<span class="t" style="left:253.00px;top:733.00px;font-size:18px;color:#f0f6fc;letter-spacing:0.335px;">images</span>
<span class="t" style="left:668.40px;top:733.00px;font-size:18px;color:#9198a1;letter-spacing:-0.131px;">Baseline Baby</span>
<span class="t" style="left:1181.80px;top:733.00px;font-size:18px;color:#9198a1;letter-spacing:0.312px;">7 minutes ago</span>
<div class="b" style="left:201px;top:768px;width:1118px;height:1px;background:#3d444d"></div>
<svg class="b" style="left:220.6px;top:783.6px;" width="20" height="20" viewBox="0 0 16 16"><path fill="#9198a1" d="M1.75 1A1.75 1.75 0 0 0 0 2.75v10.5C0 14.216.784 15 1.75 15h12.5A1.75 1.75 0 0 0 16 13.25v-8.500A1.75 1.75 0 0 0 14.25 3H7.5a.25.25 0 0 1-.2-.1l-.9-1.2C6.070 1.260 5.550 1 5 1H1.750Z"/></svg>
<span class="t" style="left:253.00px;top:784.00px;font-size:18px;color:#f0f6fc;letter-spacing:0.323px;">includes</span>
<span class="t" style="left:668.40px;top:784.00px;font-size:18px;color:#9198a1;letter-spacing:-0.131px;">Baseline Baby</span>
<span class="t" style="left:1181.80px;top:784.00px;font-size:18px;color:#9198a1;letter-spacing:0.312px;">7 minutes ago</span>
<div class="b" style="left:201px;top:819px;width:1118px;height:1px;background:#3d444d"></div>
<svg class="b" style="left:220.6px;top:834.6px;" width="20" height="20" viewBox="0 0 16 16"><path fill="#9198a1" d="M1.75 1A1.75 1.75 0 0 0 0 2.75v10.5C0 14.216.784 15 1.75 15h12.5A1.75 1.75 0 0 0 16 13.25v-8.500A1.75 1.75 0 0 0 14.25 3H7.5a.25.25 0 0 1-.2-.1l-.9-1.2C6.070 1.260 5.550 1 5 1H1.750Z"/></svg>
<span class="t" style="left:253.00px;top:835.00px;font-size:18px;color:#f0f6fc;letter-spacing:0.462px;">language</span>
<span class="t" style="left:668.40px;top:835.00px;font-size:18px;color:#9198a1;letter-spacing:-0.131px;">Baseline Baby</span>
<span class="t" style="left:1181.80px;top:835.00px;font-size:18px;color:#9198a1;letter-spacing:0.312px;">7 minutes ago</span>
<div class="b" style="left:201px;top:870px;width:1118px;height:1px;background:#3d444d"></div>
<svg class="b" style="left:220.6px;top:885.6px;" width="20" height="20" viewBox="0 0 16 16"><path fill="#9198a1" d="M1.75 1A1.75 1.75 0 0 0 0 2.75v10.5C0 14.216.784 15 1.75 15h12.5A1.75 1.75 0 0 0 16 13.25v-8.500A1.75 1.75 0 0 0 14.25 3H7.5a.25.25 0 0 1-.2-.1l-.9-1.2C6.070 1.260 5.550 1 5 1H1.750Z"/></svg>
<span class="t" style="left:253.00px;top:886.00px;font-size:18px;color:#f0f6fc;letter-spacing:0.378px;">layouts</span>
<span class="t" style="left:668.40px;top:886.00px;font-size:18px;color:#9198a1;letter-spacing:-0.131px;">Baseline Baby</span>
<span class="t" style="left:1181.80px;top:886.00px;font-size:18px;color:#9198a1;letter-spacing:0.312px;">7 minutes ago</span>
<div class="b" style="left:201px;top:921px;width:1118px;height:1px;background:#3d444d"></div>
<svg class="b" style="left:220.6px;top:936.6px;" width="20" height="20" viewBox="0 0 16 16"><path fill="#9198a1" d="M1.75 1A1.75 1.75 0 0 0 0 2.75v10.5C0 14.216.784 15 1.75 15h12.5A1.75 1.75 0 0 0 16 13.25v-8.500A1.75 1.75 0 0 0 14.25 3H7.5a.25.25 0 0 1-.2-.1l-.9-1.2C6.070 1.260 5.550 1 5 1H1.750Z"/></svg>
<span class="t" style="left:253.00px;top:937.00px;font-size:18px;color:#f0f6fc;letter-spacing:0.410px;">libraries</span>
<span class="t" style="left:668.40px;top:937.00px;font-size:18px;color:#9198a1;letter-spacing:-0.131px;">Baseline Baby</span>
<span class="t" style="left:1181.80px;top:937.00px;font-size:18px;color:#9198a1;letter-spacing:0.312px;">7 minutes ago</span>
<div class="b" style="left:201px;top:972px;width:1118px;height:1px;background:#3d444d"></div>
<svg class="b" style="left:220.6px;top:987.6px;" width="20" height="20" viewBox="0 0 16 16"><path fill="#9198a1" d="M1.75 1A1.75 1.75 0 0 0 0 2.75v10.5C0 14.216.784 15 1.75 15h12.5A1.75 1.75 0 0 0 16 13.25v-8.500A1.75 1.75 0 0 0 14.25 3H7.5a.25.25 0 0 1-.2-.1l-.9-1.2C6.070 1.260 5.550 1 5 1H1.750Z"/></svg>
<span class="t" style="left:253.00px;top:988.00px;font-size:18px;color:#f0f6fc;letter-spacing:0.321px;">media</span>
<span class="t" style="left:668.40px;top:988.00px;font-size:18px;color:#9198a1;letter-spacing:-0.131px;">Baseline Baby</span>
<span class="t" style="left:1181.80px;top:988.00px;font-size:18px;color:#9198a1;letter-spacing:0.312px;">7 minutes ago</span>
<div class="b" style="left:201px;top:1023px;width:1118px;height:1px;background:#3d444d"></div>
<svg class="b" style="left:220.6px;top:1038.6px;" width="20" height="20" viewBox="0 0 16 16"><path fill="#9198a1" d="M1.75 1A1.75 1.75 0 0 0 0 2.75v10.5C0 14.216.784 15 1.75 15h12.5A1.75 1.75 0 0 0 16 13.25v-8.500A1.75 1.75 0 0 0 14.25 3H7.5a.25.25 0 0 1-.2-.1l-.9-1.2C6.070 1.260 5.550 1 5 1H1.750Z"/></svg>
<span class="t" style="left:253.00px;top:1039.00px;font-size:18px;color:#f0f6fc;letter-spacing:0.544px;">modules</span>
<span class="t" style="left:668.40px;top:1039.00px;font-size:18px;color:#9198a1;letter-spacing:-0.131px;">Baseline Baby</span>
<span class="t" style="left:1181.80px;top:1039.00px;font-size:18px;color:#9198a1;letter-spacing:0.312px;">7 minutes ago</span>
<div class="b" style="left:201px;top:1074px;width:1118px;height:1px;background:#3d444d"></div>
<svg class="b" style="left:220.6px;top:1089.6px;" width="20" height="20" viewBox="0 0 16 16"><path fill="#9198a1" d="M1.75 1A1.75 1.75 0 0 0 0 2.75v10.5C0 14.216.784 15 1.75 15h12.5A1.75 1.75 0 0 0 16 13.25v-8.500A1.75 1.75 0 0 0 14.25 3H7.5a.25.25 0 0 1-.2-.1l-.9-1.2C6.070 1.260 5.550 1 5 1H1.750Z"/></svg>
<span class="t" style="left:253.00px;top:1090.00px;font-size:18px;color:#f0f6fc;letter-spacing:0.610px;">plugins</span>
<span class="t" style="left:668.40px;top:1090.00px;font-size:18px;color:#9198a1;letter-spacing:-0.131px;">Baseline Baby</span>
<span class="t" style="left:1181.80px;top:1090.00px;font-size:18px;color:#9198a1;letter-spacing:0.312px;">7 minutes ago</span>
<div class="b" style="left:201px;top:1125px;width:1118px;height:1px;background:#3d444d"></div>
<span class="t" style="left:1350.40px;top:295.00px;font-size:20.5px;color:#f0f6fc;font-weight:700;letter-spacing:0.107px;">About</span>
<svg class="b" style="left:1700px;top:295px;" width="20" height="20" viewBox="0 0 16 16"><path fill="#9198a1" d="M8 0a8.2 8.2 0 0 1 .701.031C9.444.095 9.990.645 10.160 1.290l.288 1.107c.018.066.079.158.212.224.231.114.454.243.668.386.123.082.233.090.299.071l1.103-.303c.644-.176 1.392.021 1.820.630.270.385.506.792.704 1.218.315.675.111 1.422-.364 1.891l-.814.806c-.049.048-.098.147-.088.294.016.257.016.515 0 .772-.010.147.038.246.088.294l.814.806c.475.469.679 1.216.364 1.891a7.977 7.977 0 0 1-.704 1.217c-.428.610-1.176.807-1.820.630l-1.102-.302c-.067-.019-.177-.011-.300.071a5.909 5.909 0 0 1-.668.386c-.133.066-.194.158-.211.224l-.290 1.106c-.168.646-.715 1.196-1.458 1.260a8.006 8.006 0 0 1-1.402 0c-.743-.064-1.289-.614-1.458-1.260l-.289-1.106c-.018-.066-.079-.158-.212-.224a5.738 5.738 0 0 1-.668-.386c-.123-.082-.233-.090-.299-.071l-1.103.303c-.644.176-1.392-.021-1.820-.630a8.120 8.120 0 0 1-.704-1.218c-.315-.675-.111-1.422.363-1.891l.815-.806c.050-.048.098-.147.088-.294a6.214 6.214 0 0 1 0-.772c.010-.147-.038-.246-.088-.294l-.815-.806C.635 6.045.431 5.298.746 4.623a7.920 7.920 0 0 1 .704-1.217c.428-.610 1.176-.807 1.820-.630l1.102.302c.067.019.177.011.300-.071.214-.143.437-.272.668-.386.133-.066.194-.158.211-.224l.290-1.106C6.009.645 6.556.095 7.299.030 7.530.010 7.764 0 8 0Zm-.571 1.525c-.036.003-.108.036-.137.146l-.289 1.105c-.147.561-.549.967-.998 1.189-.173.086-.340.183-.500.290-.417.278-.970.423-1.529.270l-1.103-.303c-.109-.030-.175.016-.195.045-.220.312-.412.644-.573.990-.014.031-.021.110.059.190l.815.806c.411.406.562.957.530 1.456a4.709 4.709 0 0 0 0 .582c.032.499-.119 1.050-.530 1.456l-.815.806c-.081.080-.073.159-.059.190.162.346.353.677.573.989.020.030.085.076.195.046l1.102-.303c.560-.153 1.113-.008 1.530.270.161.107.328.204.501.290.447.222.850.629.997 1.189l.289 1.105c.029.109.101.143.137.146a6.600 6.600 0 0 0 1.142 0c.036-.003.108-.036.137-.146l.289-1.105c.147-.561.549-.967.998-1.189.173-.086.340-.183.500-.290.417-.278.970-.423 1.529-.270l1.103.303c.109.029.175-.016.195-.045.220-.313.411-.644.573-.990.014-.031.021-.110-.059-.190l-.815-.806c-.411-.406-.562-.957-.530-1.456a4.709 4.709 0 0 0 0-.582c-.032-.499.119-1.050.530-1.456l.815-.806c.081-.080.073-.159.059-.190a6.464 6.464 0 0 0-.573-.989c-.020-.030-.085-.076-.195-.046l-1.102.303c-.560.153-1.113.008-1.530-.270a4.440 4.440 0 0 0-.501-.290c-.447-.222-.850-.629-.997-1.189l-.289-1.105c-.029-.110-.101-.143-.137-.146a6.600 6.600 0 0 0-1.142 0ZM11 8a3 3 0 1 1-6 0 3 3 0 0 1 6 0ZM9.500 8a1.500 1.500 0 1 0-3.001.001A1.500 1.500 0 0 0 9.500 8Z"/></svg>
<span class="t" style="left:1350.40px;top:345.00px;font-size:20.5px;color:#9198a1;font-style:italic;letter-spacing:-0.256px;">No description, website, or topics</span>
<span class="t" style="left:1351.40px;top:375.00px;font-size:20.5px;color:#9198a1;font-style:italic;letter-spacing:-0.292px;">provided.</span>
<svg class="b" style="left:1350px;top:424.5px;" width="20" height="20" viewBox="0 0 16 16"><path fill="#9198a1" d="M0 1.750A.750.750 0 0 1 .750 1h4.253c1.227 0 2.317.590 3 1.501A3.743 3.743 0 0 1 11.006 1h4.245a.750.750 0 0 1 .750.750v10.500a.750.750 0 0 1-.750.750h-4.507a2.250 2.250 0 0 0-1.591.659l-.622.621a.750.750 0 0 1-1.060 0l-.622-.621A2.250 2.250 0 0 0 5.258 13H.750a.750.750 0 0 1-.750-.750Zm7.251 10.324.004-5.073-.002-2.253A2.250 2.250 0 0 0 5.003 2.500H1.500v9h3.757a3.750 3.750 0 0 1 1.994.574ZM8.755 4.750l-.004 7.322a3.752 3.752 0 0 1 1.992-.572H14.500v-9h-3.495a2.250 2.250 0 0 0-2.250 2.250Z"/></svg>
<span class="t" style="left:1383.80px;top:424.00px;font-size:18px;color:#9198a1;letter-spacing:-0.085px;">Readme</span>
<svg class="b" style="left:1350px;top:460.7px;" width="20" height="20" viewBox="0 0 16 16"><path fill="#9198a1" d="M8.750.750V2h.985c.304 0 .603.080.867.231l1.290.736c.038.022.080.033.124.033h2.234a.750.750 0 0 1 0 1.500h-.427l2.111 4.692a.750.750 0 0 1-.154.838l-.530-.530.529.531-.001.002-.002.002-.006.006-.006.005-.010.010-.045.040c-.210.176-.441.327-.686.450C14.556 10.780 13.880 11 13 11a4.498 4.498 0 0 1-2.023-.454 3.544 3.544 0 0 1-.686-.450l-.045-.040-.016-.015-.006-.006-.004-.004v-.001a.750.750 0 0 1-.154-.838L12.178 4.500h-.162c-.305 0-.604-.079-.868-.231l-1.290-.736a.245.245 0 0 0-.124-.033H8.750V13h2.500a.750.750 0 0 1 0 1.500h-6.500a.750.750 0 0 1 0-1.500h2.500V3.500h-.984a.245.245 0 0 0-.124.033l-1.289.737c-.265.150-.564.230-.869.230h-.162l2.112 4.692a.750.750 0 0 1-.154.838l-.530-.530.529.531-.001.002-.002.002-.006.006-.016.015-.045.040c-.210.176-.441.327-.686.450C4.556 10.780 3.880 11 3 11a4.498 4.498 0 0 1-2.023-.454 3.544 3.544 0 0 1-.686-.450l-.045-.040-.016-.015-.006-.006-.004-.004v-.001a.750.750 0 0 1-.154-.838L2.178 4.500H1.750a.750.750 0 0 1 0-1.500h2.234a.249.249 0 0 0 .125-.033l1.288-.737c.265-.150.564-.230.869-.230h.984V.750a.750.750 0 0 1 1.500 0Zm2.945 8.477c.285.135.718.273 1.305.273s1.020-.138 1.305-.273L13 6.327Zm-10 0c.285.135.718.273 1.305.273s1.020-.138 1.305-.273L3 6.327Z"/></svg>
<span class="t" style="left:1384.80px;top:460.00px;font-size:18px;color:#9198a1;letter-spacing:-0.382px;">GPL-2.0 license</span>
<svg class="b" style="left:1350px;top:496.9px;" width="20" height="20" viewBox="0 0 16 16"><path fill="#9198a1" d="M6 2c.306 0 .582.187.696.471L10 10.731l1.304-3.260A.751.751 0 0 1 12 7h3.250a.750.750 0 0 1 0 1.500h-2.742l-1.812 4.528a.751.751 0 0 1-1.392 0L6 4.770 4.696 8.030A.750.750 0 0 1 4 8.500H.750a.750.750 0 0 1 0-1.500h2.742l1.812-4.529A.751.751 0 0 1 6 2Z"/></svg>
<span class="t" style="left:1384.80px;top:496.00px;font-size:18px;color:#9198a1;letter-spacing:0.213px;">Activity</span>
<svg class="b" style="left:1350px;top:533.1px;" width="20" height="20" viewBox="0 0 16 16"><path fill="#9198a1" d="M8 .25a.75.75 0 0 1 .673.418l1.882 3.815 4.21.612a.75.75 0 0 1 .416 1.279l-3.046 2.97.719 4.192a.751.751 0 0 1-1.088.791L8 12.347l-3.766 1.98a.75.75 0 0 1-1.088-.79l.72-4.194L.818 6.374a.75.75 0 0 1 .416-1.28l4.21-.611L7.327.668A.75.75 0 0 1 8 .25Zm0 2.445L6.615 5.5a.75.75 0 0 1-.564.41l-3.097.45 2.24 2.184a.75.75 0 0 1 .216.664l-.528 3.084 2.769-1.456a.75.75 0 0 1 .698 0l2.77 1.456-.53-3.084a.75.75 0 0 1 .216-.664l2.24-2.183-3.096-.45a.75.75 0 0 1-.564-.41L8 2.694Z"/></svg>
<span class="t" style="left:1384.80px;top:532.00px;font-size:18px;color:#9198a1;font-weight:700;">0</span>
<span class="t" style="left:1400.00px;top:532.00px;font-size:18px;color:#9198a1;letter-spacing:-0.126px;">stars</span>
<svg class="b" style="left:1350px;top:569.3px;" width="20" height="20" viewBox="0 0 16 16"><path fill="#9198a1" d="M8 2c1.981 0 3.671.992 4.933 2.078 1.27 1.091 2.187 2.345 2.637 3.023a1.62 1.62 0 0 1 0 1.798c-.45.678-1.367 1.932-2.637 3.023C11.67 13.008 9.981 14 8 14c-1.981 0-3.671-.992-4.933-2.078C1.797 10.830.88 9.576.43 8.898a1.62 1.62 0 0 1 0-1.798c.45-.677 1.367-1.931 2.637-3.022C4.33 2.992 6.019 2 8 2ZM1.679 7.932a.12.12 0 0 0 0 .136c.411.622 1.241 1.75 2.366 2.717C5.176 11.758 6.527 12.5 8 12.5c1.473 0 2.825-.742 3.955-1.715 1.124-.967 1.954-2.096 2.366-2.717a.12.12 0 0 0 0-.136c-.412-.621-1.242-1.75-2.366-2.717C10.824 4.242 9.473 3.5 8 3.5c-1.473 0-2.825.742-3.955 1.715-1.124.967-1.954 2.096-2.366 2.717ZM8 10a2 2 0 1 1-.001-3.999A2 2 0 0 1 8 10Z"/></svg>
<span class="t" style="left:1385.00px;top:569.00px;font-size:18px;color:#9198a1;font-weight:700;">1</span>
<span class="t" style="left:1401.00px;top:569.00px;font-size:18px;color:#9198a1;letter-spacing:0.367px;">watching</span>
<svg class="b" style="left:1350px;top:605.5px;" width="20" height="20" viewBox="0 0 16 16"><path fill="#9198a1" d="M5 5.372v.878c0 .414.336.750.750.750h4.500a.750.750 0 0 0 .750-.750v-.878a2.250 2.250 0 1 1 1.500 0v.878a2.250 2.250 0 0 1-2.250 2.250h-1.500v2.128a2.251 2.251 0 1 1-1.500 0V8.500h-1.500A2.250 2.250 0 0 1 3.500 6.250v-.878a2.250 2.250 0 1 1 1.500 0ZM5 3.250a.750.750 0 1 0-1.500 0 .750.750 0 0 0 1.500 0Zm6.750.750a.750.750 0 1 0 0-1.500.750.750 0 0 0 0 1.500Zm-3 8.750a.750.750 0 1 0-1.500 0 .750.750 0 0 0 1.500 0Z"/></svg>
<span class="t" style="left:1384.80px;top:605.00px;font-size:18px;color:#9198a1;font-weight:700;">0</span>
<span class="t" style="left:1400.00px;top:605.00px;font-size:18px;color:#9198a1;letter-spacing:0.324px;">forks</span>
<div class="b" style="left:1350px;top:647px;width:370px;height:1px;background:#2f353d"></div>
<div class="b" style="left:1350px;top:783px;width:370px;height:1px;background:#2f353d"></div>
<div class="b" style="left:1350px;top:919px;width:370px;height:1px;background:#2f353d"></div>
<div class="b" style="left:1350px;top:1087px;width:370px;height:1px;background:#2f353d"></div>
<span class="t" style="left:1349.70px;top:673.00px;font-size:20.5px;color:#f0f6fc;font-weight:700;letter-spacing:-0.258px;">Releases</span>
<span class="t" style="left:1349.40px;top:721.00px;font-size:15.5px;color:#9198a1;letter-spacing:0.157px;">No releases published</span>
<span class="t" style="left:1350.40px;top:744.00px;font-size:15.5px;color:#4493f8;letter-spacing:-0.064px;">Create a new release</span>
<div class="b" style="left:1350.4px;top:760.6px;width:145.5px;height:1.2px;background:#4493f8"></div>
<span class="t" style="left:1349.70px;top:809.00px;font-size:20.5px;color:#f0f6fc;font-weight:700;letter-spacing:-0.057px;">Packages</span>
<span class="t" style="left:1349.40px;top:857.00px;font-size:15.5px;color:#9198a1;letter-spacing:0.184px;">No packages published</span>
<span class="t" style="left:1349.40px;top:880.00px;font-size:15.5px;color:#4493f8;letter-spacing:0.242px;">Publish your first package</span>
<div class="b" style="left:1350.4px;top:896.3px;width:182px;height:1.2px;background:#4493f8"></div>
<span class="t" style="left:1349.80px;top:945.00px;font-size:20.5px;color:#f0f6fc;font-weight:700;letter-spacing:0.086px;">Languages</span>
<div class="b" style="left:1350px;top:990px;width:370px;height:10px;border-radius:5px;overflow:hidden"><div class="b" style="left:0;top:0;width:283.300px;height:10px;background:#4f5d95"></div><div class="b" style="left:285.800px;top:0;width:47.300px;height:10px;background:#f1e05a"></div><div class="b" style="left:335.800px;top:0;width:26.500px;height:10px;background:#663399"></div><div class="b" style="left:364.600px;top:0;width:5.400px;height:10px;background:#ededed"></div></div>
<div class="b" style="left:1355.2px;top:1016px;width:10px;height:10px;background:#4f5d95;border-radius:50%"></div>
<span class="t" style="left:1379.20px;top:1013.00px;font-size:15px;color:#f0f6fc;font-weight:700;letter-spacing:-0.119px;">PHP</span>
<span class="t" style="left:1415.60px;top:1013.00px;font-size:15.5px;color:#9198a1;letter-spacing:-0.617px;">78.2%</span>
<div class="b" style="left:1487.1px;top:1016px;width:10px;height:10px;background:#f1e05a;border-radius:50%"></div>
<span class="t" style="left:1511.90px;top:1013.00px;font-size:15.5px;color:#f0f6fc;font-weight:700;letter-spacing:-0.361px;">JavaScript</span>
<span class="t" style="left:1592.10px;top:1013.00px;font-size:15.5px;color:#9198a1;letter-spacing:-0.517px;">13.1%</span>
<div class="b" style="left:1355.2px;top:1045px;width:10px;height:10px;background:#663399;border-radius:50%"></div>
<span class="t" style="left:1380.20px;top:1043.00px;font-size:14.5px;color:#f0f6fc;font-weight:700;letter-spacing:-2.371px;">CSS</span>
<span class="t" style="left:1411.90px;top:1042.00px;font-size:15.5px;color:#9198a1;letter-spacing:-1.082px;">7.1%</span>
<div class="b" style="left:1474px;top:1045px;width:10px;height:10px;background:#ededed;border-radius:50%"></div>
<span class="t" style="left:1499.80px;top:1042.00px;font-size:15.5px;color:#f0f6fc;font-weight:700;letter-spacing:0.398px;">Other</span>
<span class="t" style="left:1548.00px;top:1042.00px;font-size:15.5px;color:#9198a1;letter-spacing:-0.616px;">1.6%</span>
<span class="t" style="left:1350.40px;top:1113.00px;font-size:20.5px;color:#f0f6fc;font-weight:700;letter-spacing:0.121px;">Suggested workflows</span>
</div></div>
</div></body></html>
